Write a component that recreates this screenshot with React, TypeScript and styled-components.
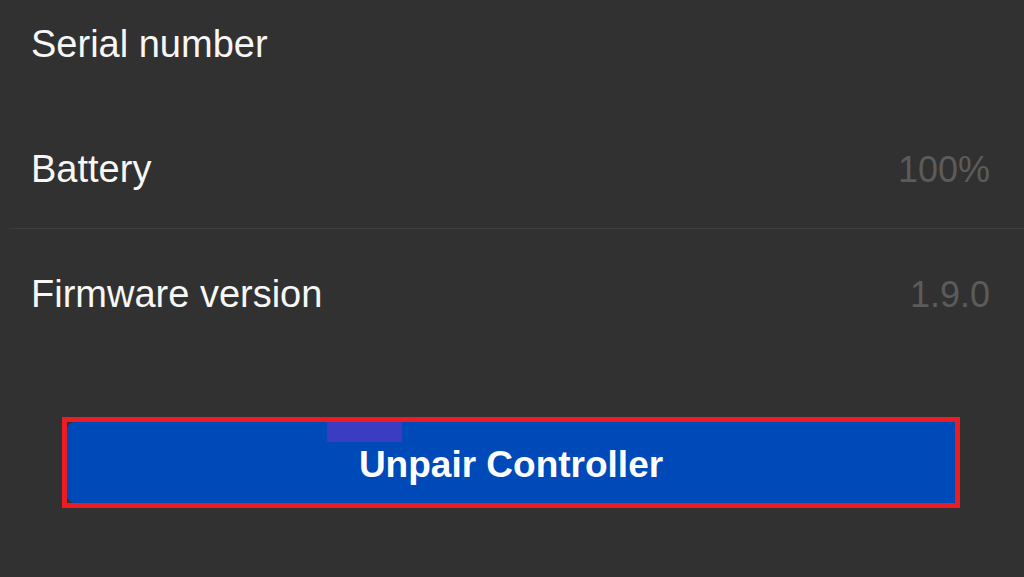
import React from "react";
import styled, { createGlobalStyle } from "styled-components";

const COLORS = {
  BG: "#313131",
  LABEL: "#f7f7f7",
  VALUE: "#5b5b5b",
  LINE: "#3e3e3e",
  BLUE: "#0049b9",
  RED: "#ed1c24",
  PATCH: "#3a3dc1",
};

const GlobalStyle = createGlobalStyle`
  html, body {
    margin: 0;
    padding: 0;
    background: ${COLORS.BG};
    overflow: hidden;
  }
  body {
    font-family: "Liberation Sans", Arial, sans-serif;
  }
`;

const Page = styled.div`
  width: 1024px;
  height: 577px;
  background: ${COLORS.BG};
  overflow: hidden;
`;

const List = styled.div`
  margin-top: -18px;
  display: flex;
  flex-direction: column;
`;

const Row = styled.div`
  height: 125px;
  display: flex;
  align-items: center;
  justify-content: space-between;
  padding: 0 34px 0 31px;
`;

const Label = styled.span`
  font-size: 38px;
  color: ${COLORS.LABEL};
`;

const Value = styled.span`
  font-size: 36px;
  color: ${COLORS.VALUE};
`;

// thin separator, takes no room of its own
const Divider = styled.div`
  height: 1px;
  margin: -4px 0 3px 9px;
  background: ${COLORS.LINE};
`;

const Highlight = styled.div`
  position: relative;
  margin: 60px 0 0 62px;
  width: 898px;
  height: 91px;
  box-sizing: border-box;
  border: 5px solid ${COLORS.RED};
`;

const UnpairButton = styled.button`
  width: 100%;
  height: 100%;
  border: none;
  border-radius: 8px 0 0 8px;
  background: ${COLORS.BLUE};
  color: #ffffff;
  font-family: "Liberation Sans", Arial, sans-serif;
  font-weight: 700;
  font-size: 37px;
  padding: 4px 0 0 0;
  cursor: pointer;
`;

const Patch = styled.div`
  position: absolute;
  left: 260px;
  top: 0;
  width: 75px;
  height: 20px;
  background: ${COLORS.PATCH};
`;

const rows = [
  { label: "Serial number", value: "" },
  { label: "Battery", value: "100%" },
  { label: "Firmware version", value: "1.9.0" },
];

export default function App() {
  return (
    <Page>
      <GlobalStyle />
      <List>
        {rows.map((row, i) => (
          <React.Fragment key={row.label}>
            <Row>
              <Label>{row.label}</Label>
              <Value>{row.value}</Value>
            </Row>
            {i === 1 && <Divider />}
          </React.Fragment>
        ))}
      </List>
      <Highlight>
        <UnpairButton type="button">Unpair Controller</UnpairButton>
        <Patch />
      </Highlight>
    </Page>
  );
}
